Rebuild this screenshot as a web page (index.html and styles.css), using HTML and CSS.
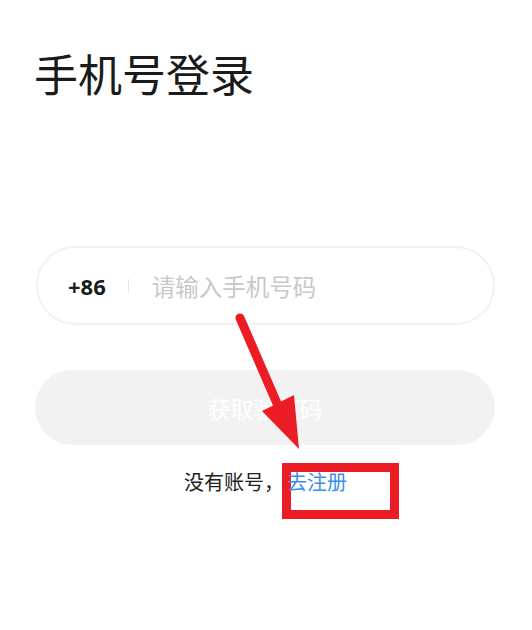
FILE: index.html
```html
<!DOCTYPE html>
<html lang="zh-CN">
<head>
    <meta charset="UTF-8">
    <meta name="viewport" content="width=device-width, initial-scale=1.0">
    <title>手机号登录</title>
    <link rel="stylesheet" href="styles.css">
</head>
<body>
    <div class="page">
        <h1 class="title">手机号登录</h1>

        <div class="phone-field">
            <span class="area-code">+86</span>
            <span class="divider"></span>
            <input type="text" class="phone-input" placeholder="请输入手机号码">
        </div>

        <button class="code-btn">获取验证码</button>

        <!-- annotation marks drawn over the screenshot -->
        <div class="mark-box"></div>

        <div class="register">
            没有账号，<a href="#" class="register-link">去注册</a>
        </div>

        <svg class="mark-arrow" width="532" height="630" viewBox="0 0 532 630">
            <line x1="240" y1="318" x2="279" y2="408" stroke="#ec1c24" stroke-width="9" stroke-linecap="round"/>
            <polygon points="262,411 294,395 299,449" fill="#ec1c24"/>
        </svg>
    </div>
</body>
</html>
```

FILE: styles.css
```css
body {
    margin: 0;
    padding: 0;
    background: #fff;
    font-family: "Noto Sans CJK SC", "Noto Sans", sans-serif;
}
.page {
    position: relative;
    width: 532px;
    height: 630px;
    padding: 0 37px 0 36px;
    box-sizing: border-box;
}
.title {
    margin: 0 0 0 -2px;
    padding-top: 41px;
    font-size: 44px;
    font-weight: 400;
    line-height: 64px;
    color: #1a1a1a;
}
.phone-field {
    margin-top: 141px;
    height: 79px;
    box-sizing: border-box;
    border: 2px solid #f2f2f2;
    border-radius: 40px;
    display: flex;
    align-items: center;
    padding-left: 30px;
}
.area-code {
    font-family: "Open Sans", "Noto Sans", sans-serif;
    font-size: 22px;
    font-weight: 700;
    color: #1a1a1a;
}
.divider {
    width: 1px;
    height: 14px;
    background: #e6e6e6;
    margin: 0 23px 0 22px;
}
.phone-input {
    flex: 1;
    border: none;
    outline: none;
    background: transparent;
    padding: 0;
    font-family: "Noto Sans CJK SC", sans-serif;
    font-size: 23.5px;
    color: #333;
}
.phone-input::placeholder {
    color: #c8c8c8;
}
.code-btn {
    display: block;
    width: 460px;
    margin: 45px 0 0 -1px;
    height: 75px;
    border: none;
    border-radius: 38px;
    background: #f2f2f2;
    color: #fff;
    font-family: "Noto Sans CJK SC", sans-serif;
    font-size: 23px;
    padding: 0;
}
.register {
    position: relative;
    margin-top: 22px;
    text-align: center;
    font-size: 20px;
    line-height: 30px;
    color: #222;
}
.register-link {
    margin-left: 3px;
    color: #3a8ef0;
    text-decoration: none;
}
.mark-box {
    position: absolute;
    left: 282px;
    top: 463px;
    width: 117px;
    height: 56px;
    box-sizing: border-box;
    border: 9px solid #ec1c24;
}
.mark-arrow {
    position: absolute;
    left: 0;
    top: 0;
    pointer-events: none;
}
```
